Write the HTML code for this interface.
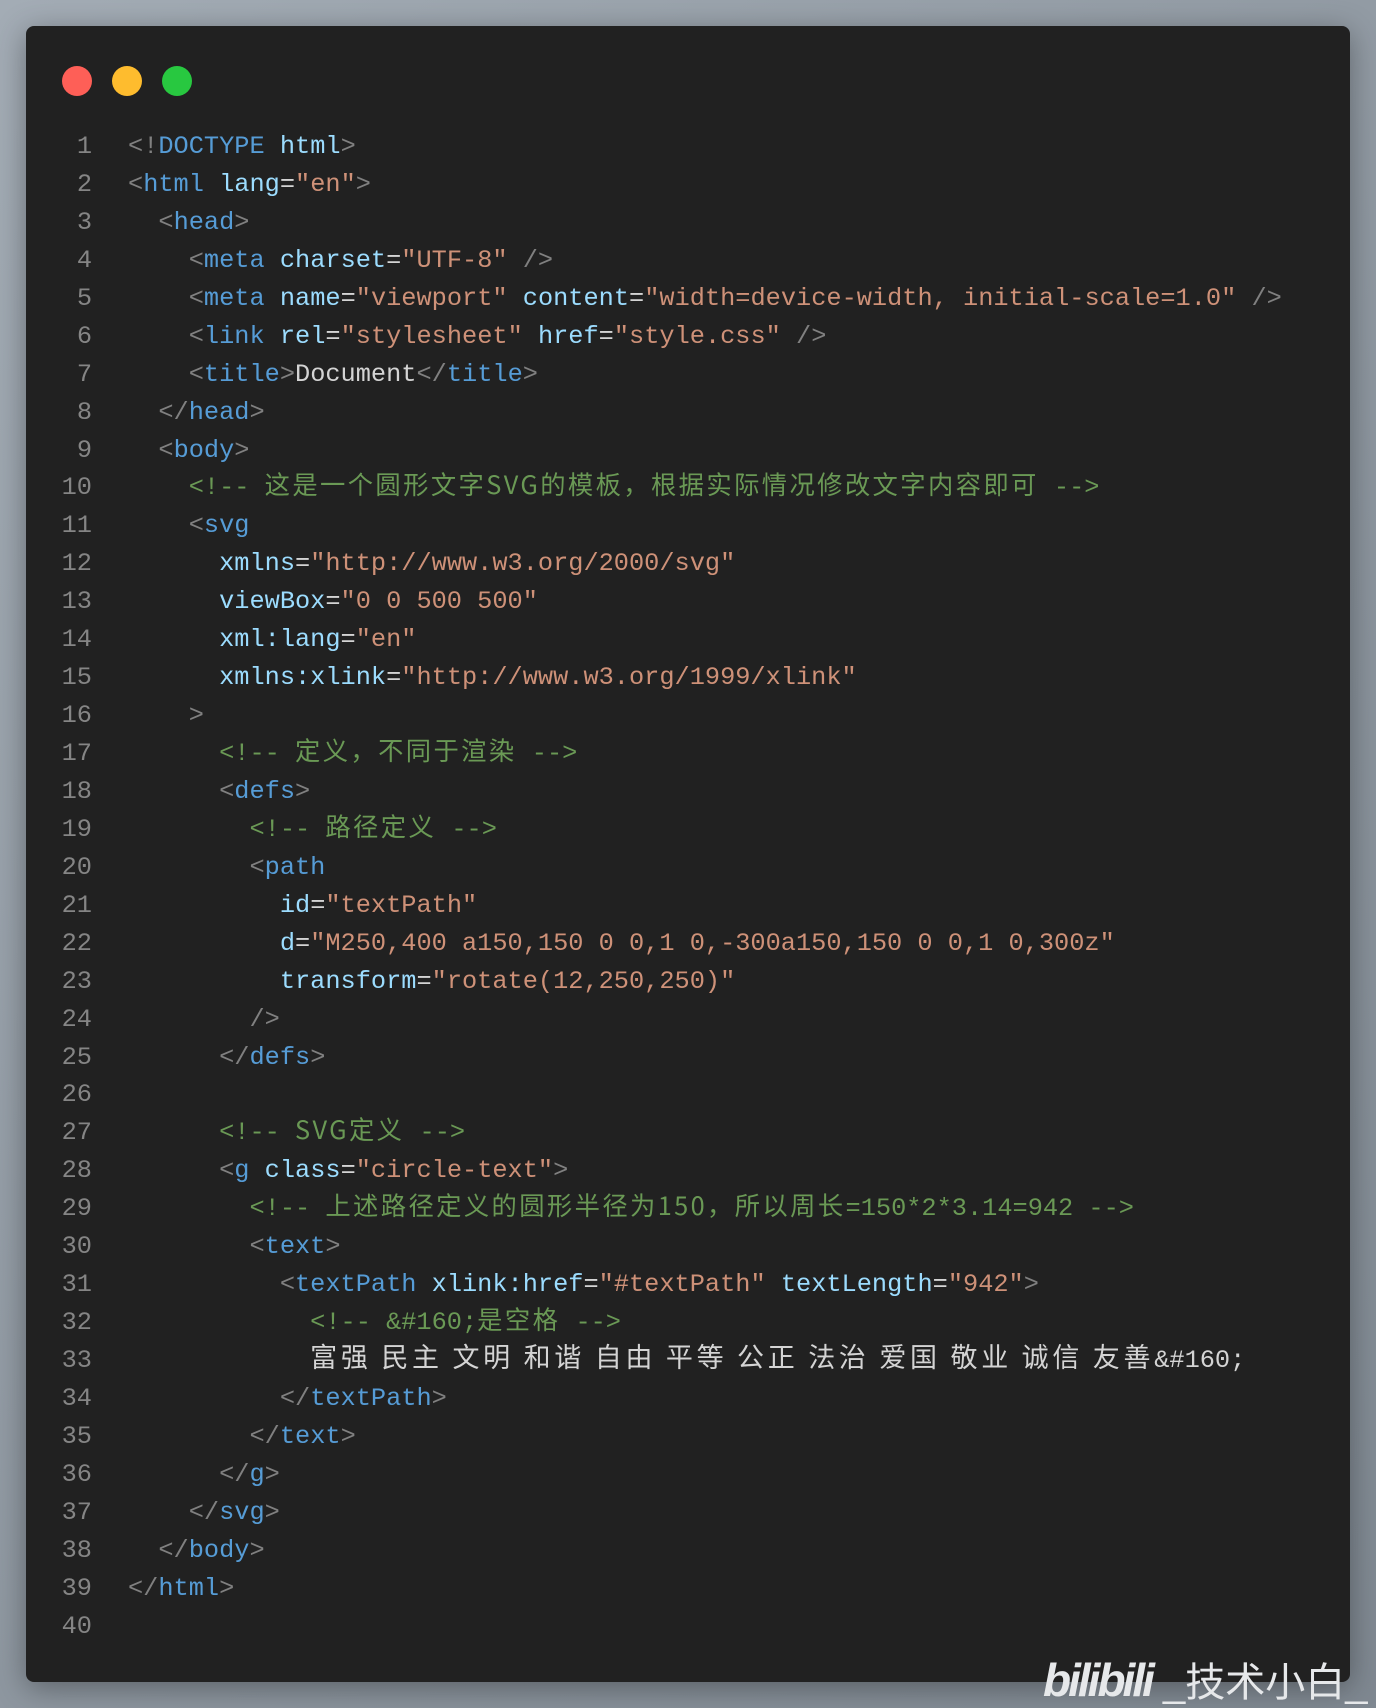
<!DOCTYPE html>
<html><head><meta charset="utf-8"><style>
html,body{margin:0;padding:0}
body{width:1376px;height:1708px;background:linear-gradient(135deg,#a3acb5,#8c959e 60%,#7f8891);position:relative;overflow:hidden;font-family:"Liberation Mono","Noto Sans CJK SC",monospace}
.card{position:absolute;left:26px;top:26px;width:1324px;height:1656px;background:#212121;border-radius:8px;box-shadow:0 6px 30px rgba(0,0,0,.35)}
.dot{position:absolute;top:40px;width:30px;height:30px;border-radius:50%}
.nums{position:absolute;left:40px;top:128px;width:52px;text-align:right;color:#858585;font-size:25.3px;line-height:37.94px;white-space:pre}
.code{position:absolute;left:128px;top:128px;color:#d4d4d4;font-size:25.3px;line-height:37.94px;white-space:normal}
.code div{height:37.94px;overflow:visible;white-space:pre}
.p{color:#808080}.t{color:#569cd6}.a{color:#9cdcfe}.s{color:#ce9178}.c{color:#6a9955}
.z{font-family:"Noto Sans CJK SC",sans-serif;letter-spacing:2.4px;line-height:20px}
.zb{font-family:"Noto Sans CJK SC",sans-serif;font-size:27px;letter-spacing:3.7px;line-height:20px}
.wm{position:absolute;left:1043px;top:1650px;color:#e6e8ea;font-family:"Liberation Sans","Noto Sans CJK SC",sans-serif;white-space:nowrap}
</style></head><body>
<div class="card">
<div class="dot" style="left:36px;background:#fe5f57"></div>
<div class="dot" style="left:86px;background:#febc2e"></div>
<div class="dot" style="left:136px;background:#28c840"></div>
</div>
<div class="nums">1
2
3
4
5
6
7
8
9
10
11
12
13
14
15
16
17
18
19
20
21
22
23
24
25
26
27
28
29
30
31
32
33
34
35
36
37
38
39
40</div>
<div class="code"><div><span class="p">&lt;!</span><span class="t">DOCTYPE</span> <span class="a">html</span><span class="p">&gt;</span></div>
<div><span class="p">&lt;</span><span class="t">html</span> <span class="a">lang</span>=<span class="s">"en"</span><span class="p">&gt;</span></div>
<div>  <span class="p">&lt;</span><span class="t">head</span><span class="p">&gt;</span></div>
<div>    <span class="p">&lt;</span><span class="t">meta</span> <span class="a">charset</span>=<span class="s">"UTF-8"</span> <span class="p">/&gt;</span></div>
<div>    <span class="p">&lt;</span><span class="t">meta</span> <span class="a">name</span>=<span class="s">"viewport"</span> <span class="a">content</span>=<span class="s">"width=device-width, initial-scale=1.0"</span> <span class="p">/&gt;</span></div>
<div>    <span class="p">&lt;</span><span class="t">link</span> <span class="a">rel</span>=<span class="s">"stylesheet"</span> <span class="a">href</span>=<span class="s">"style.css"</span> <span class="p">/&gt;</span></div>
<div>    <span class="p">&lt;</span><span class="t">title</span><span class="p">&gt;</span>Document<span class="p">&lt;/</span><span class="t">title</span><span class="p">&gt;</span></div>
<div>  <span class="p">&lt;/</span><span class="t">head</span><span class="p">&gt;</span></div>
<div>  <span class="p">&lt;</span><span class="t">body</span><span class="p">&gt;</span></div>
<div>    <span class="c">&lt;!-- <span class="z">这是一个圆形文字SVG的模板，根据实际情况修改文字内容即可</span> --&gt;</span></div>
<div>    <span class="p">&lt;</span><span class="t">svg</span></div>
<div>      <span class="a">xmlns</span>=<span class="s">"http://www.w3.org/2000/svg"</span></div>
<div>      <span class="a">viewBox</span>=<span class="s">"0 0 500 500"</span></div>
<div>      <span class="a">xml:lang</span>=<span class="s">"en"</span></div>
<div>      <span class="a">xmlns:xlink</span>=<span class="s">"http://www.w3.org/1999/xlink"</span></div>
<div>    <span class="p">&gt;</span></div>
<div>      <span class="c">&lt;!-- <span class="z">定义，不同于渲染</span> --&gt;</span></div>
<div>      <span class="p">&lt;</span><span class="t">defs</span><span class="p">&gt;</span></div>
<div>        <span class="c">&lt;!-- <span class="z">路径定义</span> --&gt;</span></div>
<div>        <span class="p">&lt;</span><span class="t">path</span></div>
<div>          <span class="a">id</span>=<span class="s">"textPath"</span></div>
<div>          <span class="a">d</span>=<span class="s">"M250,400 a150,150 0 0,1 0,-300a150,150 0 0,1 0,300z"</span></div>
<div>          <span class="a">transform</span>=<span class="s">"rotate(12,250,250)"</span></div>
<div>        <span class="p">/&gt;</span></div>
<div>      <span class="p">&lt;/</span><span class="t">defs</span><span class="p">&gt;</span></div>
<div> </div>
<div>      <span class="c">&lt;!-- <span class="z">SVG定义</span> --&gt;</span></div>
<div>      <span class="p">&lt;</span><span class="t">g</span> <span class="a">class</span>=<span class="s">"circle-text"</span><span class="p">&gt;</span></div>
<div>        <span class="c">&lt;!-- <span class="z">上述路径定义的圆形半径为150，所以周长</span>=150*2*3.14=942 --&gt;</span></div>
<div>        <span class="p">&lt;</span><span class="t">text</span><span class="p">&gt;</span></div>
<div>          <span class="p">&lt;</span><span class="t">textPath</span> <span class="a">xlink:href</span>=<span class="s">"#textPath"</span> <span class="a">textLength</span>=<span class="s">"942"</span><span class="p">&gt;</span></div>
<div>            <span class="c">&lt;!-- &amp;#160;<span class="z">是空格</span> --&gt;</span></div>
<div>            <span class="zb">富强 民主 文明 和谐 自由 平等 公正 法治 爱国 敬业 诚信 友善</span>&amp;#160;</div>
<div>          <span class="p">&lt;/</span><span class="t">textPath</span><span class="p">&gt;</span></div>
<div>        <span class="p">&lt;/</span><span class="t">text</span><span class="p">&gt;</span></div>
<div>      <span class="p">&lt;/</span><span class="t">g</span><span class="p">&gt;</span></div>
<div>    <span class="p">&lt;/</span><span class="t">svg</span><span class="p">&gt;</span></div>
<div>  <span class="p">&lt;/</span><span class="t">body</span><span class="p">&gt;</span></div>
<div><span class="p">&lt;/</span><span class="t">html</span><span class="p">&gt;</span></div>
</div>
<div class="wm"><span style="font-size:46px;font-weight:bold;font-style:italic;letter-spacing:-3px">bilibili</span><span style="font-size:40px"> _技术小白_</span></div>
</body></html>
